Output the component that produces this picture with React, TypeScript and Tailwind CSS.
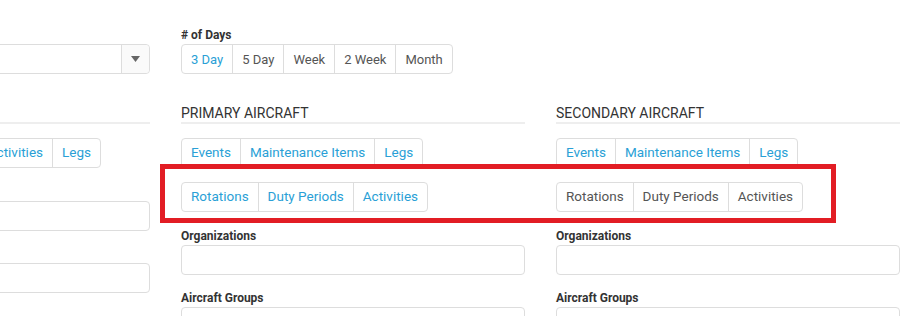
import React from 'react';

type Btn = { label: string; active?: boolean };

function BtnGroup({ items, small }: { items: Btn[]; small?: boolean }) {
  return (
    <div className="inline-flex h-[30px] border border-[#dddddd] rounded-[4px] bg-white">
      {items.map((b, i) => (
        <span
          key={b.label}
          className={`flex items-center px-[9px] ${small ? 'text-[13px]' : 'text-[13.5px]'} leading-none ${i > 0 ? 'border-l border-[#dddddd]' : ''} ${b.active ? 'text-[#2a9fd6]' : 'text-[#555555]'}`}
        >
          {b.label}
        </span>
      ))}
    </div>
  );
}

function Label({ children }: { children: React.ReactNode }) {
  return <div className="text-xs font-bold leading-[17px] text-[#333333]">{children}</div>;
}

function Header({ children }: { children: React.ReactNode }) {
  return (
    <div className="mt-[30px] text-sm leading-[18px] text-[#333333] border-b-2 border-[#eeeeee] uppercase">
      {children}
    </div>
  );
}

function Input() {
  return <div className="h-[30px] border border-[#dddddd] rounded-[4px] bg-white" />;
}

function Filters() {
  return (
    <>
      <div className="mt-[16px]">
        <Label>Organizations</Label>
        <Input />
      </div>
      <div className="mt-[15px]">
        <Label>Aircraft Groups</Label>
        <Input />
      </div>
    </>
  );
}

const blue = (labels: string[]): Btn[] => labels.map(l => ({ label: l, active: true }));
const gray = (labels: string[]): Btn[] => labels.map(l => ({ label: l }));

export default function App() {
  return (
    <div className="relative w-[900px] h-[316px] overflow-hidden bg-white" style={{ fontFamily: 'Roboto, "Liberation Sans", sans-serif' }}>
      <div className="flex gap-[31px] ml-[-194px] pt-[27px]">
        {/* left column (mostly off screen) */}
        <div className="w-[344px] shrink-0">
          <Label>Crew</Label>
          <div className="flex h-[30px] border border-[#dddddd] rounded-[4px] bg-white">
            <div className="flex-1" />
            <div className="w-[28px] border-l border-[#dddddd] bg-[#fafafa] rounded-r-[4px] flex items-center justify-center">
              <svg width="9" height="6" viewBox="0 0 9 6"><path d="M0 0h9L4.5 6z" fill="#666" /></svg>
            </div>
          </div>
          <Header>Crew Filters</Header>
          <div className="mt-[14px]">
            <BtnGroup items={blue(['Rotations', 'Duty Periods', 'Activities', 'Legs'])} />
          </div>
          <Filters />
        </div>

        {/* primary */}
        <div className="w-[344px] shrink-0">
          <Label># of Days</Label>
          <BtnGroup
            small
            items={[
              { label: '3 Day', active: true },
              { label: '5 Day' },
              { label: 'Week' },
              { label: '2 Week' },
              { label: 'Month' },
            ]}
          />
          <Header>Primary Aircraft</Header>
          <div className="mt-[14px]">
            <BtnGroup items={blue(['Events', 'Maintenance Items', 'Legs'])} />
          </div>
          <div className="mt-[14px]">
            <BtnGroup items={blue(['Rotations', 'Duty Periods', 'Activities'])} />
          </div>
          <Filters />
        </div>

        {/* secondary */}
        <div className="w-[344px] shrink-0">
          <div className="h-[47px]" />
          <Header>Secondary Aircraft</Header>
          <div className="mt-[14px]">
            <BtnGroup items={blue(['Events', 'Maintenance Items', 'Legs'])} />
          </div>
          <div className="mt-[14px]">
            <BtnGroup items={gray(['Rotations', 'Duty Periods', 'Activities'])} />
          </div>
          <Filters />
        </div>
      </div>

      {/* highlight annotation */}
      <div className="absolute left-[160px] top-[164px] w-[676px] h-[59px] border-[5px] border-[#e21d24] pointer-events-none" />
    </div>
  );
}
